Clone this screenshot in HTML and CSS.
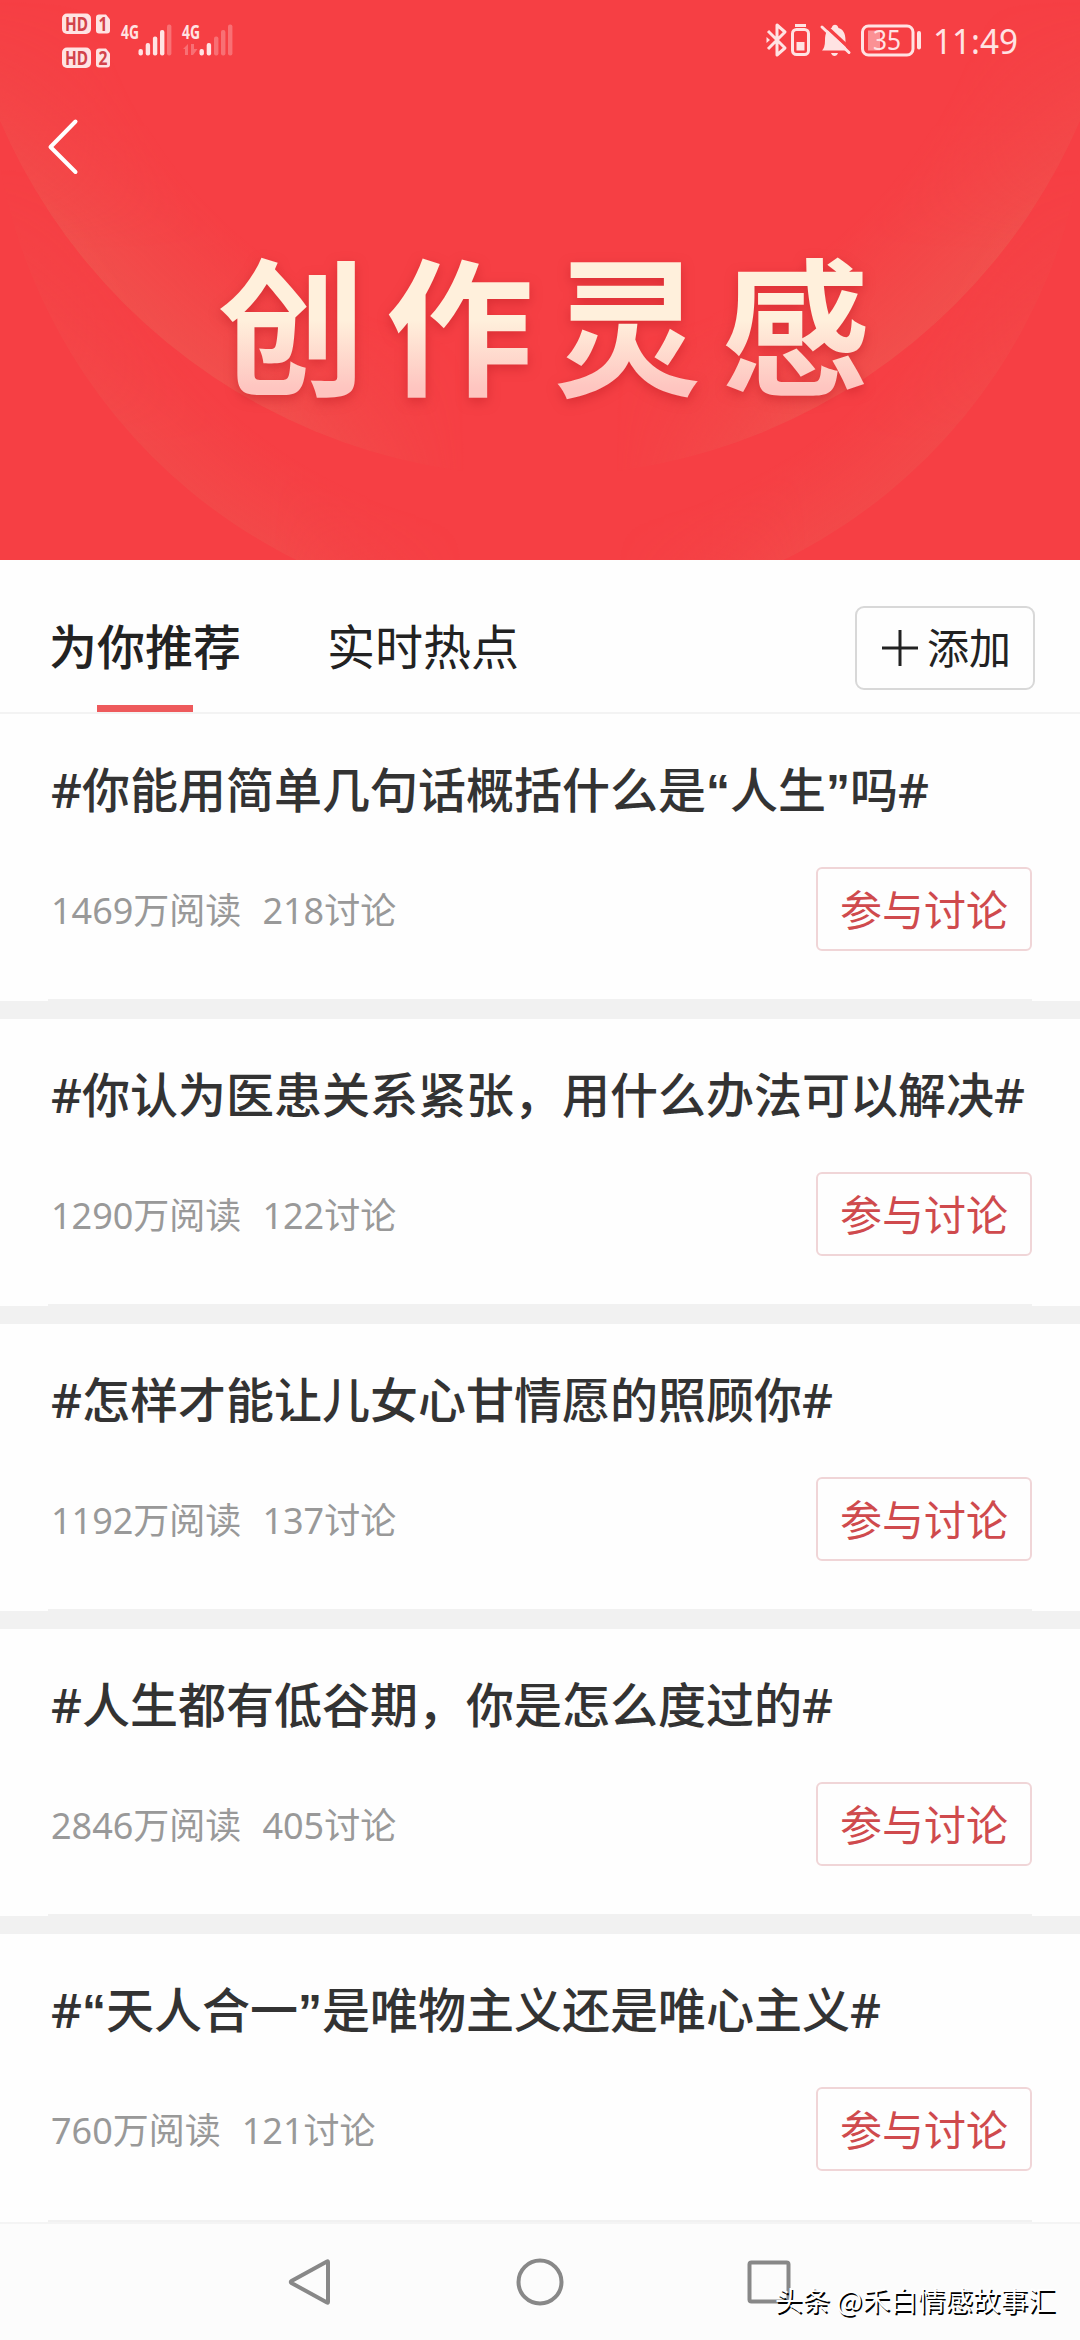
FILE: index.html
```html
<!DOCTYPE html>
<html lang="zh-CN">
<head>
  <meta charset="utf-8">
  <title>创作灵感</title>
  <link rel="stylesheet" href="styles.css">
</head>
<body>
<header class="banner">
  <svg class="banner-bg" width="1080" height="560" viewBox="0 0 1080 560">
    <defs>
      <radialGradient id="glow1">
        <stop offset="0.78" stop-color="#e8705e" stop-opacity="0"/>
        <stop offset="1" stop-color="#e8705e" stop-opacity="0.32"/>
      </radialGradient>
      <radialGradient id="glow2">
        <stop offset="0.84" stop-color="#e8705e" stop-opacity="0"/>
        <stop offset="1" stop-color="#e8705e" stop-opacity="0.2"/>
      </radialGradient>
      <linearGradient id="sides">
        <stop offset="0" stop-color="#fff"/>
        <stop offset="0.25" stop-color="#fff"/>
        <stop offset="0.43" stop-color="#000"/>
        <stop offset="0.57" stop-color="#000"/>
        <stop offset="0.75" stop-color="#fff"/>
        <stop offset="1" stop-color="#fff"/>
      </linearGradient>
      <linearGradient id="down" x2="0" y2="1">
        <stop offset="0" stop-color="#000"/>
        <stop offset="0.45" stop-color="#fff"/>
      </linearGradient>
      <linearGradient id="down2" x2="0" y2="1">
        <stop offset="0.3" stop-color="#000"/>
        <stop offset="0.8" stop-color="#fff"/>
      </linearGradient>
      <mask id="fade"><rect width="1080" height="560" fill="url(#sides)"/></mask>
      <mask id="fade-top"><rect width="1080" height="560" fill="url(#down)"/></mask>
      <mask id="fade-top2"><rect width="1080" height="560" fill="url(#down2)"/></mask>
    </defs>
    <g mask="url(#fade)">
      <g mask="url(#fade-top2)"><circle cx="540" cy="68" r="549" fill="url(#glow2)"/></g>
      <g mask="url(#fade-top)"><circle cx="540" cy="-112" r="588" fill="url(#glow1)"/></g>
    </g>
  </svg>

  <div class="status">
    <svg width="180" height="60" viewBox="60 10 180 60" fill="#ffe3e3">
      <rect x="62" y="13.500" width="29" height="20.500" rx="5"/>
      <path d="M99 14.500h7l4 5v11a3 3 0 0 1-3 3h-8a3 3 0 0 1-3-3v-13a3 3 0 0 1 3-3z"/>
      <rect x="62" y="47.500" width="29" height="20.500" rx="5"/>
      <path d="M99 48.500h7l4 5v11a3 3 0 0 1-3 3h-8a3 3 0 0 1-3-3v-13a3 3 0 0 1 3-3z"/>
      <g class="badge-text">
        <text x="65" y="30.500" textLength="23" lengthAdjust="spacingAndGlyphs">HD</text>
        <text x="98.500" y="30.500" textLength="9" lengthAdjust="spacingAndGlyphs">1</text>
        <text x="65" y="64.500" textLength="23" lengthAdjust="spacingAndGlyphs">HD</text>
        <text x="98.500" y="64.500" textLength="9" lengthAdjust="spacingAndGlyphs">2</text>
      </g>
      <g class="net-text">
        <text x="121" y="39" textLength="18" lengthAdjust="spacingAndGlyphs">4G</text>
        <text x="182" y="39" textLength="18" lengthAdjust="spacingAndGlyphs">4G</text>
      </g>
      <rect x="138.500" y="49" width="4.400" height="6.500" rx="2"/>
      <rect x="145.700" y="43" width="4.400" height="12.500" rx="2"/>
      <rect x="152.900" y="36.500" width="4.400" height="19" rx="2"/>
      <rect x="160" y="30" width="4.400" height="25.500" rx="2"/>
      <rect x="167" y="24.500" width="4.400" height="31" rx="2" opacity="0.3"/>
      <rect x="199.500" y="49" width="4.400" height="6.500" rx="2"/>
      <rect x="206.700" y="43" width="4.400" height="12.500" rx="2"/>
      <g opacity="0.3">
        <rect x="214" y="36.500" width="4.400" height="19" rx="2"/>
        <rect x="221" y="30" width="4.400" height="25.500" rx="2"/>
        <rect x="228" y="24.500" width="4.400" height="31" rx="2"/>
        <path d="M188 44v11h-3v-6h-2zM191 44h3v5h3.500l-4.500 6h-2z"/>
      </g>
    </svg>
    <svg width="260" height="60" viewBox="762 10 260 60" fill="none" stroke="#ffe3e3" stroke-width="3">
      <path d="M768 31l17 17-8 7V25l8 7-17 17" stroke-linejoin="round"/>
      <path d="M766.500 37l3.500 3-3.500 3z" fill="#ffe3e3" stroke="none"/>
      <rect x="792.500" y="29.500" width="16" height="25" rx="4"/>
      <path d="M795 25.500h11"/>
      <path d="M796.500 42h8v8.500h-8z" fill="#ffe3e3" stroke="none"/>
      <path d="M822 50.500q3-3 3-10c0-8 2.500-11.500 6.500-12.500 1-4.500 6-4.500 7 0 4 1 7 4.500 7 12.500 0 5 .5 7 1.500 10zM831 53h7q-1 3-3.500 3t-3.500-3z" fill="#ffe3e3" stroke="none"/>
      <path d="M824 24.500l27 25" stroke="#f63f44" stroke-width="3.500"/>
      <path d="M822 27l27 25.500" stroke-linecap="round"/>
      <rect x="862.500" y="26" width="50.500" height="29" rx="6"/>
      <path d="M868 30.500h12v20h-12z" fill="#ffe3e3" stroke="none" opacity="0.5"/>
      <path d="M919 33v14.500" stroke-width="4" stroke-linecap="round"/>
      <text class="battery-text" x="873" y="49.500" textLength="28" lengthAdjust="spacingAndGlyphs">35</text>
      <text class="clock" x="933" y="54" textLength="85" lengthAdjust="spacingAndGlyphs">11:49</text>
    </svg>
  </div>

  <a class="back">
    <svg width="34" height="60" viewBox="0 0 34 60">
      <path d="M29.500 4.500L4.500 30l25 25" fill="none" stroke="#fff" stroke-width="4" stroke-linecap="round" stroke-linejoin="round"/>
    </svg>
  </a>
  <h1>创作灵感</h1>
</header>

<nav class="tabs">
  <a class="tab active">为你推荐</a>
  <a class="tab">实时热点</a>
  <button class="add">
    <svg width="36" height="36" viewBox="0 0 36 36"><path d="M0 18h36M18 0v36" stroke="#222" stroke-width="3"/></svg>
    <span>添加</span>
  </button>
</nav>

<main class="topics">
  <section class="topic">
    <h2>#你能用简单几句话概括什么是<span class="quote">“</span>人生<span class="quote">”</span>吗#</h2>
    <div class="info">
      <span>1469万阅读</span><span>218讨论</span>
      <button class="join">参与讨论</button>
    </div>
  </section>
  <section class="topic">
    <h2>#你认为医患关系紧张，用什么办法可以解决#</h2>
    <div class="info">
      <span>1290万阅读</span><span>122讨论</span>
      <button class="join">参与讨论</button>
    </div>
  </section>
  <section class="topic">
    <h2>#怎样才能让儿女心甘情愿的照顾你#</h2>
    <div class="info">
      <span>1192万阅读</span><span>137讨论</span>
      <button class="join">参与讨论</button>
    </div>
  </section>
  <section class="topic">
    <h2>#人生都有低谷期，你是怎么度过的#</h2>
    <div class="info">
      <span>2846万阅读</span><span>405讨论</span>
      <button class="join">参与讨论</button>
    </div>
  </section>
  <section class="topic">
    <h2>#<span class="quote">“</span>天人合一<span class="quote">”</span>是唯物主义还是唯心主义#</h2>
    <div class="info">
      <span>760万阅读</span><span>121讨论</span>
      <button class="join">参与讨论</button>
    </div>
  </section>
</main>

<footer class="navbar">
  <svg width="48" height="50" viewBox="0 0 48 50"><path d="M41 5v40q0 1-1 .5L4.500 26q-1.500-1 0-2L40 4.500q1-.5 1 .5z"/></svg>
  <svg width="50" height="50" viewBox="0 0 50 50"><circle cx="25" cy="25" r="21.500"/></svg>
  <svg width="48" height="50" viewBox="0 0 48 50"><rect x="4.500" y="5.500" width="39" height="39" rx="2"/></svg>
  <div class="watermark">头条 @禾白情感故事汇</div>
</footer>
</body>
</html>
```
FILE: styles.css
```css
* {
  box-sizing: border-box;
}
body {
  margin: 0;
  width: 1080px;
  height: 2340px;
  overflow: hidden;
  background: #fefefe;
  color: #222;
  font-family: "Noto Sans", "Noto Sans CJK SC", sans-serif;
}
h1, h2 {
  margin: 0;
}
button {
  font-family: inherit;
  background: none;
  padding: 0 0 3px;
}
svg {
  display: block;
}

/* red banner */
.banner {
  position: relative;
  height: 560px;
  background: #f63f44;
  overflow: hidden;
}
.banner-bg {
  position: absolute;
  left: 0;
  top: 0;
}
.status {
  position: relative;
  display: flex;
  justify-content: space-between;
  padding: 10px 58px 0 60px;
}
.badge-text {
  fill: #d2424a;
  font-size: 19px;
  font-weight: bold;
}
.net-text {
  font-size: 20px;
  font-weight: bold;
}
.battery-text {
  fill: #ffe3e3;
  stroke: none;
  font-size: 27px;
}
.clock {
  fill: #ffe3e3;
  stroke: none;
  font-size: 35px;
}
.back {
  position: relative;
  display: block;
  padding: 47px 0 0 46px;
}
.banner h1 {
  position: relative;
  margin-top: 58px;
  padding-left: 27px;
  text-align: center;
  font-family: "Noto Sans CJK SC", sans-serif;
  font-size: 148px;
  font-weight: 700;
  line-height: 170px;
  letter-spacing: 20px;
  color: transparent;
  background: linear-gradient(#fff0dc 50%, #fec5c0 90%);
  -webkit-background-clip: text;
  background-clip: text;
  filter: drop-shadow(0 4px 6px rgba(190, 30, 35, 0.5));
}

/* tabs */
.tabs {
  display: flex;
  height: 154px;
  padding: 0 45px 0 49px;
  border-bottom: 2px solid #f3f3f3;
}
.tab {
  display: flex;
  flex-direction: column;
  align-items: center;
  width: 192px;
  margin-right: 86px;
  padding-top: 51px;
  font-size: 48px;
  line-height: 72px;
}
.tab.active {
  font-weight: 500;
}
.tab.active::after {
  content: "";
  width: 96px;
  height: 7px;
  margin-top: 22px;
  background: #ee5a5c;
}
.add {
  display: flex;
  align-items: center;
  justify-content: center;
  gap: 9px;
  width: 180px;
  height: 84px;
  margin: 46px 0 0 auto;
  padding: 0 0 0 3px;
  border: 2px solid #d8d8d8;
  border-radius: 9px;
  font-size: 42px;
  color: #222;
}
.add span {
  padding-bottom: 5px;
}

/* topic list */
.topics {
  height: 1510px;
  border-bottom: 2px solid #f4f4f4;
  overflow: hidden;
}
.topic {
  display: flex;
  flex-direction: column;
  height: 305px;
  padding: 40px 48px 0 51px;
  border-bottom: 18px solid #f1f1f1;
}
.topic::after {
  content: "";
  height: 2px;
  margin: auto 0 0 -3px;
  background: #f1f1f1;
}
.topic:last-child {
  height: 288px;
  border-bottom: 0;
}
.topic h2 {
  height: 72px;
  font-size: 48px;
  font-weight: 500;
  line-height: 72px;
  white-space: nowrap;
  color: #333;
}
.quote {
  font-family: "Liberation Sans", sans-serif;
  font-weight: bold;
}
.info {
  display: flex;
  align-items: center;
  gap: 21px;
  margin-top: 41px;
  font-size: 36px;
  color: #999;
}
.info span {
  padding-bottom: 1px;
}
.join {
  width: 216px;
  height: 84px;
  margin-left: auto;
  border: 2px solid #f0d5d7;
  border-radius: 6px;
  font-size: 42px;
  color: #cf4a4d;
}

/* system navigation */
.navbar {
  position: relative;
  display: flex;
  justify-content: center;
  gap: 180px;
  height: 116px;
  padding-top: 33px;
  background: #fcfcfc;
}
.navbar svg {
  fill: none;
  stroke: #888;
  stroke-width: 4;
}
.watermark {
  position: absolute;
  left: 775px;
  top: 55px;
  font-family: "Noto Sans CJK SC", sans-serif;
  font-size: 27.600px;
  line-height: 40px;
  white-space: nowrap;
  color: #fff;
  text-shadow: 1.500px 1.500px 0 #000;
}
```
